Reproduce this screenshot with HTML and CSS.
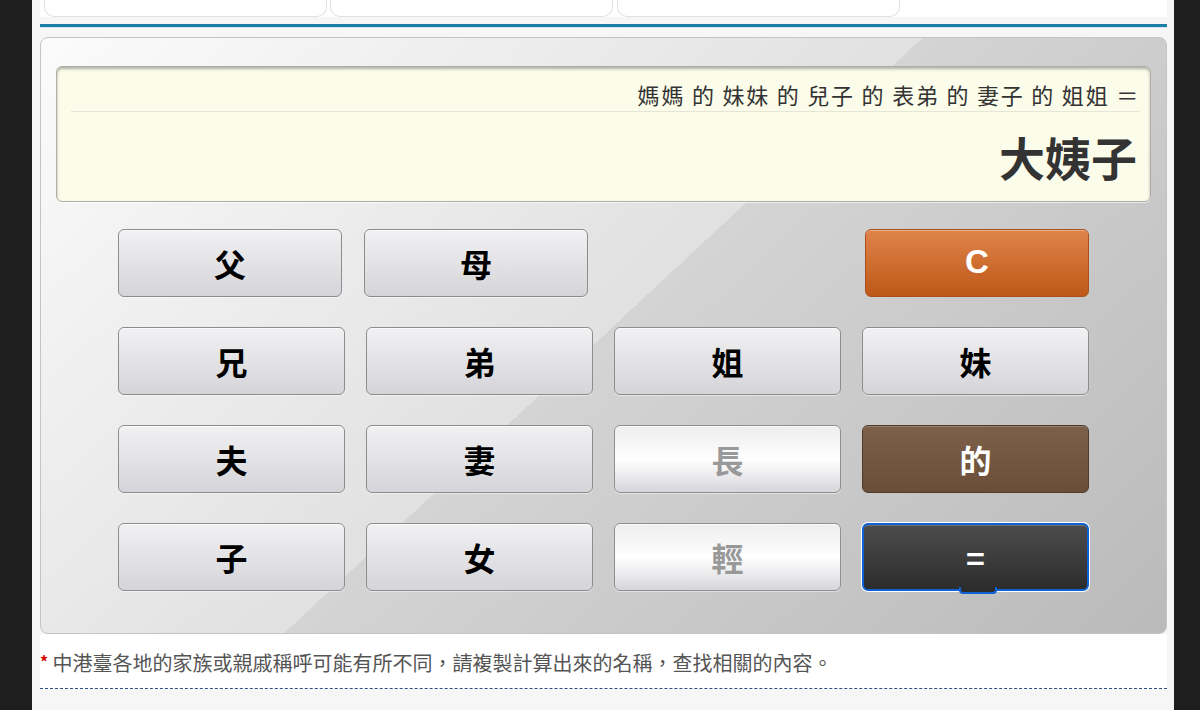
FILE: index.html
```html
<!DOCTYPE html>
<html lang="zh-Hant">

<head>
    <meta charset="UTF-8">
    <meta name="viewport" content="width=device-width, initial-scale=1.0">
    <title>親戚稱呼計算器</title>
    <link rel="stylesheet" href="styles.css">
</head>

<body>
    <div class="page">
        <div class="tabs">
            <div class="tab tab-1"></div>
            <div class="tab tab-2"></div>
            <div class="tab tab-3"></div>
        </div>
        <div class="bar"></div>

        <div class="calc">
            <div class="screen">
                <div class="expr">媽媽 的 妹妹 的 兒子 的 表弟 的 妻子 的 姐姐 ＝</div>
                <div class="result">大姨子</div>
            </div>

            <div class="keys">
                <button class="key key-short">父</button>
                <button class="key key-short key-shift">母</button>
                <span class="key-blank"></span>
                <button class="key key-short key-clear">C</button>

                <button class="key">兄</button>
                <button class="key">弟</button>
                <button class="key">姐</button>
                <button class="key">妹</button>

                <button class="key">夫</button>
                <button class="key">妻</button>
                <button class="key key-mod">長</button>
                <button class="key key-of">的</button>

                <button class="key">子</button>
                <button class="key">女</button>
                <button class="key key-mod">輕</button>
                <button class="key key-eq">=</button>
            </div>
        </div>

        <p class="note"><span class="star">*</span> 中港臺各地的家族或親戚稱呼可能有所不同，請複製計算出來的名稱，查找相關的內容。</p>
    </div>
</body>

</html>
```

FILE: styles.css
```css
* {
    margin: 0;
    padding: 0;
    box-sizing: border-box;
}

body {
    background-color: #1e1e1e;
    font-family: "Noto Sans CJK TC", "Noto Sans", sans-serif;
}

.page {
    width: 1142px;
    min-height: 710px;
    margin-left: 32px;
    padding: 0 7px 0 8px;
    background-color: #f6f6f6;
}

/* 頂部被截掉的頁籤 */
.tabs {
    display: flex;
    height: 17px;
    padding-left: 4px;
    background-color: #fff;
}

.tab {
    height: 17px;
    background-color: #fff;
    border: 1px solid #dde2e8;
    border-top: none;
    border-radius: 0 0 10px 10px;
}

.tab-1 {
    width: 283px;
}

.tab-2 {
    width: 283px;
    margin-left: 3px;
}

.tab-3 {
    width: 283px;
    margin-left: 4px;
}

.bar {
    height: 4px;
    margin-top: 7px;
    background-color: #1b7ea6;
    border-bottom: 1px solid #d9e6ec;
}

/* 計算器 */
.calc {
    height: 597px;
    margin-top: 9px;
    padding: 28px 15px 0;
    border: 1px solid #c4c4c4;
    border-radius: 8px;
    background-image:
        linear-gradient(137deg, rgba(255, 255, 255, 0.3) 50%, rgba(255, 255, 255, 0) 50%),
        linear-gradient(137deg, #fafafa 0%, #d4d4d4 50%, #bababa 100%);
}

.screen {
    height: 136px;
    padding: 0 13px 0 14px;
    border: 1px solid #aeaea6;
    border-radius: 6px;
    background-color: #fbfce9;
    box-shadow: inset 0 2px 3px rgba(0, 0, 0, 0.3), 0 1px 0 rgba(255, 255, 255, 0.6);
    text-align: right;
    color: #333;
}

.expr {
    height: 45px;
    padding-top: 10px;
    line-height: 34px;
    font-size: 22px;
    letter-spacing: 1.8px;
    margin-right: -3px;
    border-bottom: 1px solid #e6e6d6;
}

.result {
    line-height: 88px;
    font-size: 46px;
    font-weight: bold;
}

.keys {
    display: grid;
    grid-template-columns: repeat(4, 227px);
    grid-auto-rows: 68px;
    column-gap: 21px;
    row-gap: 30px;
    margin: 27px 62px 0;
}

.key {
    position: relative;
    font-family: "Noto Sans CJK TC", sans-serif;
    font-size: 32px;
    font-weight: bold;
    color: #000;
    border: 1px solid #8c8c8c;
    border-radius: 6px;
    background-image: linear-gradient(#f1f1f3, #d5d5d9);
    box-shadow: inset 0 1px 0 rgba(255, 255, 255, 0.8), 0 1px 1px rgba(255, 255, 255, 0.5);
    cursor: pointer;
}

.key-short {
    width: 224px;
}

.key-shift {
    margin-left: -2px;
}

.key-clear {
    justify-self: end;
    padding-bottom: 2px;
    color: #fff;
    font-family: "Liberation Sans", Arial, sans-serif;
    font-size: 33px;
    border-color: #a9501c;
    background-image: linear-gradient(#e0844a, #bd5818);
    box-shadow: inset 0 1px 0 rgba(255, 255, 255, 0.35);
}

.key-mod {
    color: #999;
    border-color: #8e8e8e;
    background-image: linear-gradient(#eeeeef 0%, #f9f9f9 35%, #ffffff 50%, #ececee 75%, #d6d6da 100%);
}

.key-of {
    color: #fff;
    border-color: #4e3b2b;
    background-image: linear-gradient(#7c6049, #6a4e37);
    box-shadow: inset 0 1px 0 rgba(255, 255, 255, 0.2);
}

.key-eq {
    color: #fff;
    border: 2px solid #0f62d6;
    background-image: linear-gradient(#4c4c4c, #2c2c2c);
    box-shadow: 0 0 0 1px #fff, inset 0 1px 0 rgba(255, 255, 255, 0.2);
}

/* 等號鍵下方的小凸起 */
.key-eq::after {
    content: "";
    position: absolute;
    left: 50%;
    bottom: -5px;
    width: 34px;
    height: 5px;
    margin-left: -17px;
    background-color: #2c2c2c;
    border: 2px solid #0f62d6;
    border-top: none;
    border-radius: 0 0 4px 4px;
}

/* 提示 */
.note {
    height: 55px;
    padding-top: 15px;
    line-height: 28px;
    font-size: 20px;
    color: #555;
    background-color: #fff;
    border-bottom: 1px dashed #2f4f80;
}

.star {
    display: inline-block;
    vertical-align: top;
    margin-top: -2px;
    font-size: 16px;
    color: #d40000;
    font-weight: bold;
}
```
